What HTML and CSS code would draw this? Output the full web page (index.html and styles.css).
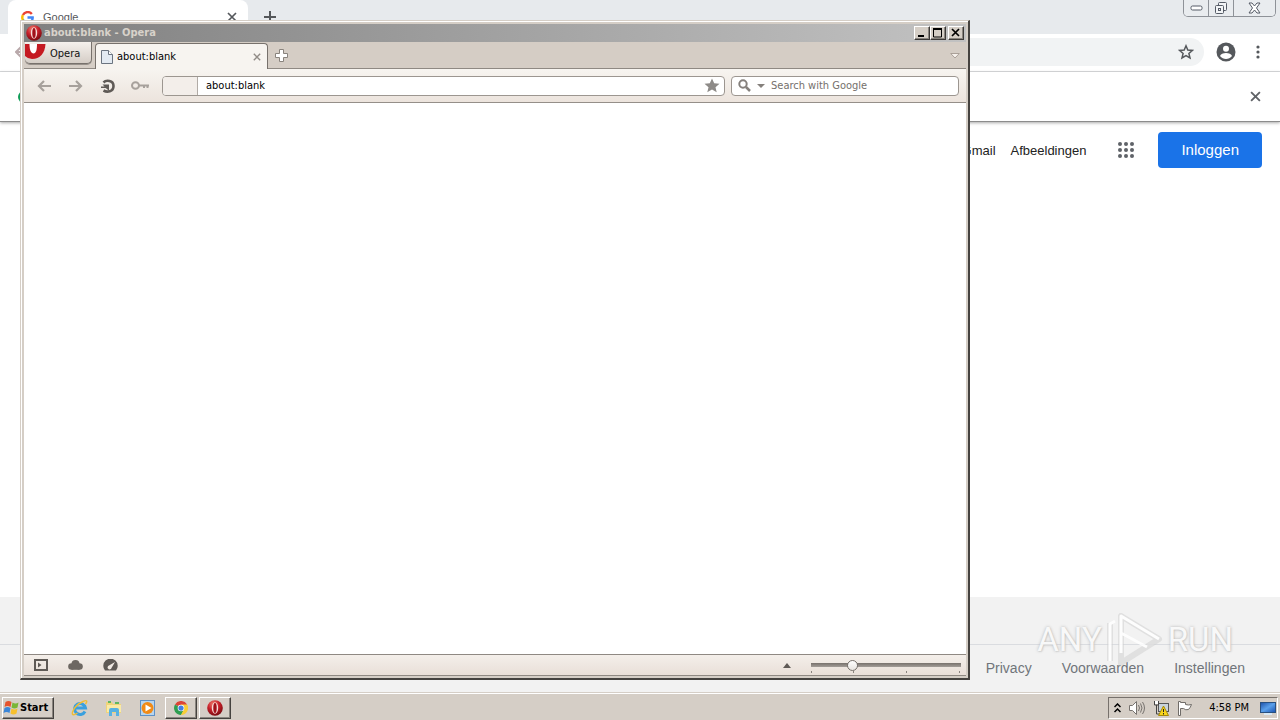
FILE: index.html
```html
<!DOCTYPE html>
<html lang="nl">
<head>
<meta charset="utf-8">
<title>about:blank - Opera</title>
<link rel="stylesheet" href="styles.css">
</head>
<body>
<svg class="defs" width="0" height="0" aria-hidden="true">
  <defs>
    <radialGradient id="red" cx="40%" cy="25%" r="75%"><stop offset="0" stop-color="#f08070"/><stop offset=".5" stop-color="#c8202a"/><stop offset="1" stop-color="#7c0a10"/></radialGradient>
    <linearGradient id="blue" x1="0" y1="0" x2="1" y2="1"><stop offset="0" stop-color="#1c50a8"/><stop offset=".5" stop-color="#5aa0ea"/><stop offset="1" stop-color="#1850b0"/></linearGradient>
    <symbol id="opera" viewBox="0 0 16 16"><circle cx="8" cy="8" r="7.8" fill="url(#red)"/><ellipse cx="8" cy="8" rx="3.2" ry="5.8" fill="#f6dcd8"/><ellipse cx="8" cy="8" rx="1.700" ry="5" fill="#a01018"/></symbol>
    <symbol id="cross" viewBox="0 0 10 10"><path d="M1 1l8 8M9 1L1 9" fill="none" stroke="currentColor" stroke-width="1.700"/></symbol>
  </defs>
</svg>
<div class="desktop">
  <main class="chrome">
    <div class="strip">
      <div class="chrome-tab">
        <svg class="g-logo" width="13" height="13" viewBox="0 0 24 24" fill="none" stroke-width="4.500"><path d="M20 5.500A10 10 0 0 0 3.500 7.500" stroke="#ea4335"/><path d="M3.500 7.500a10 10 0 0 0 0 9" stroke="#fbbc05"/><path d="M3.500 16.500A10 10 0 0 0 18.500 19.500" stroke="#34a853"/><path d="M18.500 19.500A9 9 0 0 0 21.500 12H12" stroke="#4285f4"/></svg>
        <span>Google</span>
        <button class="plain" aria-label="Tabblad sluiten"><svg width="10" height="10"><use href="#cross"/></svg></button>
      </div>
      <button class="plain new-tab" aria-label="Nieuw tabblad"><svg width="12" height="12" viewBox="0 0 12 12"><path d="M6 0v12M0 6h12" stroke="#54575a" stroke-width="2"/></svg></button>
      <div class="caption">
        <button aria-label="Minimaliseren"><svg width="13" height="6" viewBox="0 0 13 6"><rect x="1" y="1" width="11" height="4" rx="1.500" fill="#fff" stroke="#555b66"/></svg></button>
        <button aria-label="Herstellen"><svg width="14" height="14" viewBox="0 0 14 14" fill="#f2f4f6" stroke="#555b66"><rect x="4.500" y="1.500" width="8" height="8" rx="1"/><rect x="1.500" y="4.500" width="8" height="8" rx="1"/><rect x="4.500" y="7.500" width="2" height="2"/></svg></button>
        <button aria-label="Sluiten"><svg width="13" height="12" viewBox="0 0 13 12"><path d="M1 1h3l2.500 3L9 1h3L8.500 6l3.500 5H9L6.500 8 4 11H1l3.500-5z" fill="#fff" stroke="#555b66"/></svg></button>
      </div>
    </div>
    <div class="nav">
      <button class="plain" aria-label="Vorige"><svg width="12" height="12" viewBox="0 0 12 12" fill="none" stroke="#b9a9ab" stroke-width="2"><path d="M6 1L1 6l5 5M1 6h11"/></svg></button>
      <div class="omnibox">
        <input type="text" aria-label="Adres">
        <button class="plain" aria-label="Bladwijzer"><svg width="16" height="16" viewBox="0 0 16 16" fill="none" stroke="#55585c" stroke-width="1.500"><path d="M8 1.800l1.800 4.200 4.600.4-3.500 3 1.100 4.500L8 11.500l-4 2.400 1.100-4.500-3.500-3 4.600-.4z"/></svg></button>
      </div>
      <button class="plain" aria-label="Profiel"><svg width="20" height="20" viewBox="0 0 20 20"><circle cx="10" cy="10" r="9.500" fill="#55585c"/><circle cx="10" cy="6.700" r="3" fill="#fff"/><path d="M4 14c1-4 11-4 12 0-3 4-9 4-12 0z" fill="#fff"/></svg></button>
      <button class="plain" aria-label="Menu"><svg width="4" height="14" viewBox="0 0 4 14" fill="#55585c"><circle cx="2" cy="2" r="1.600"/><circle cx="2" cy="7" r="1.600"/><circle cx="2" cy="12" r="1.600"/></svg></button>
    </div>
    <div class="infobar">
      <span class="dot"></span>
      <button class="plain" aria-label="Melding sluiten"><svg width="11" height="11"><use href="#cross"/></svg></button>
    </div>
    <div class="links">
      <a href="#">Gmail</a>
      <a href="#">Afbeeldingen</a>
      <button class="plain apps" aria-label="Google-apps"><svg width="18" height="18" viewBox="0 0 18 18" fill="#5f6368"><circle cx="3" cy="3" r="2"/><circle cx="9" cy="3" r="2"/><circle cx="15" cy="3" r="2"/><circle cx="3" cy="9" r="2"/><circle cx="9" cy="9" r="2"/><circle cx="15" cy="9" r="2"/><circle cx="3" cy="15" r="2"/><circle cx="9" cy="15" r="2"/><circle cx="15" cy="15" r="2"/></svg></button>
      <a class="login" href="#">Inloggen</a>
    </div>
    <footer class="footer">
      <div class="country"></div>
      <div class="legal"><a href="#">Privacy</a><a href="#">Voorwaarden</a><a href="#">Instellingen</a></div>
    </footer>
  </main>

  <section class="window" aria-label="Opera">
    <header class="title">
      <svg width="16" height="16"><use href="#opera"/></svg>
      <h1>about:blank - Opera</h1>
      <div class="controls">
        <button aria-label="Minimize"><svg width="10" height="10" viewBox="0 0 10 10"><path d="M1 8h6" stroke="#000" stroke-width="2"/></svg></button>
        <button aria-label="Maximize"><svg width="10" height="10" viewBox="0 0 10 10"><path d="M.5 0v9h8V0" fill="none" stroke="#000"/><path d="M0 1h9" stroke="#000" stroke-width="2"/></svg></button>
        <button class="x" aria-label="Close"><svg width="10" height="10" viewBox="0 0 10 10"><path d="M1 1l7 7M8 1L1 8" stroke="#000" stroke-width="1.700"/></svg></button>
      </div>
    </header>
    <div class="tabs">
      <button class="menu"><svg width="21" height="16" viewBox="0 0 21 16"><path d="M0 0H20.500C20 9 15 15 7 15Q3 15 0 12z" fill="#c51a22"/><path d="M4.500 0h7.500c0 6-1 9.500-3.500 9.500S4.500 6 4.500 0z" fill="#fff"/></svg><span>Opera</span></button>
      <div class="tab">
        <svg width="12" height="14" viewBox="0 0 12 14"><path d="M.5.500h7l4 4v9H.5z" fill="#e3eaf2" stroke="#6b7480"/><path d="M7.500.500v4h4" fill="#fff" stroke="#6b7480"/></svg>
        <span>about:blank</span>
        <button class="plain" aria-label="Close tab"><svg width="8" height="8"><use href="#cross"/></svg></button>
      </div>
      <button class="plain add" aria-label="New tab"><svg width="13" height="13" viewBox="0 0 13 13"><path d="M4.500.500h4v4h4v4h-4v4h-4v-4h-4v-4h4z" fill="#fff" stroke="#89837d"/></svg></button>
      <button class="plain closed" aria-label="Closed tabs"><svg width="10" height="7" viewBox="0 0 10 7"><path d="M.7 1.500h8.600L5 6z" fill="#f6f1ec" stroke="#aaa098"/></svg></button>
    </div>
    <div class="toolbar">
      <button class="plain" aria-label="Back"><svg width="14" height="12" viewBox="0 0 14 12" fill="none" stroke="#a7a19c" stroke-width="2.200"><path d="M7 1L2 6l5 5M2 6h12"/></svg></button>
      <button class="plain" aria-label="Forward"><svg width="14" height="12" viewBox="0 0 14 12" fill="none" stroke="#a7a19c" stroke-width="2.200"><path d="M7 1l5 5-5 5M12 6H0"/></svg></button>
      <button class="plain" aria-label="Reload"><svg width="14" height="14" viewBox="0 0 14 14"><path d="M2.500 3.500C5 .8 12.500 1 12.500 7S6 13.500 2.500 11.500" fill="none" stroke="#5f5a56" stroke-width="2.600"/><path d="M0 9V7.500h3.500L1.500 5.500h6.500V12L6 10 4.500 9z" fill="#5f5a56"/></svg></button>
      <button class="plain" aria-label="Password"><svg width="18" height="9" viewBox="0 0 18 9" fill="none" stroke="#a7a19c" stroke-width="2"><ellipse cx="4.500" cy="4.500" rx="3.500" ry="3.300"/><path d="M8 4.500h10M13 4v3M16.500 4v3"/></svg></button>
      <div class="field address">
        <span class="badge"></span>
        <input type="text" value="about:blank" aria-label="Address">
        <button class="plain" aria-label="Bookmark"><svg width="16" height="15" viewBox="0 0 16 15"><path d="M8 .5l2.200 4.700 5.300.5-4 3.500 1.200 5L8 11.500l-4.700 2.700 1.200-5-4-3.500 5.300-.5z" fill="#8e8b88"/></svg></button>
      </div>
      <div class="field search">
        <svg width="13" height="13" viewBox="0 0 13 13" fill="none" stroke="#85807c"><circle cx="5" cy="5" r="3.700" stroke-width="2"/><path d="M8 8l4 4" stroke-width="2.500"/></svg>
        <svg width="8" height="4" viewBox="0 0 8 4"><path d="M0 0h8L4 4z" fill="#85807c"/></svg>
        <input type="text" placeholder="Search with Google" aria-label="Search with Google">
      </div>
    </div>
    <div class="page"></div>
    <div class="status">
      <button class="plain" aria-label="Panels"><svg width="14" height="12" viewBox="0 0 14 12"><rect x="1" y="1" width="12" height="10" fill="none" stroke="#5f5a56" stroke-width="2"/><path d="M4 3.500v5L7.500 6z" fill="#5f5a56"/></svg></button>
      <button class="plain" aria-label="Opera Link"><svg width="15" height="10" viewBox="0 0 15 10" fill="#6d6762"><circle cx="3.500" cy="6.500" r="3.300"/><circle cx="7.500" cy="4" r="4"/><circle cx="11.500" cy="6.500" r="3.300"/><path d="M3.500 5h8v4.800h-8z"/></svg></button>
      <button class="plain" aria-label="Opera Turbo"><svg width="15" height="12" viewBox="0 0 15 12"><path d="M2 11.500A7.200 7.200 0 1 1 13 11.500z" fill="#5f5a56"/><path d="M12 3L6 6.500a2 2 0 1 0 2.500 2.500z" fill="#f1eae4"/></svg></button>
      <button class="plain up" aria-label="View"><svg width="8" height="5" viewBox="0 0 8 5"><path d="M0 5h8L4 0z" fill="#5f5a56"/></svg></button>
      <div class="zoom"><input type="range" min="0" max="100" value="26" aria-label="Zoom"><div class="ticks"><i></i><i></i><i></i><i></i></div></div>
    </div>
  </section>

  <div class="watermark">
    <span>ANY</span>
    <svg width="58" height="58" viewBox="0 0 58 58" fill="none" stroke-linejoin="round"><g stroke="#cfcfcf" stroke-opacity=".6" stroke-width="6"><path d="M15 5v47l38-24zM4 12v38"/></g><path d="M15 5v47l38-24z" stroke="#dedede" stroke-width="4"/><path d="M15 42V5l38 23M4 50V13l5-3M15 22l26 14" stroke="#fff" stroke-width="3"/></svg>
    <span>RUN</span>
  </div>

  <nav class="taskbar" aria-label="Taskbar">
    <button class="raised start"><svg width="17" height="16" viewBox="0 0 16 16"><path d="M2 2q3-2 6 0L7 7Q4 5 1 7z" fill="#e5532d"/><path d="M9 2.500q3 2 6 0l-1 5q-3 2-6 0z" fill="#79b637"/><path d="M1 8q3-2 6 0l-1 5q-3-2-6 0z" fill="#3b86d8"/><path d="M8 8.500q3 2 6 0l-1 5q-3 2-6 0z" fill="#f7c02c"/></svg><b>Start</b></button>
    <div class="quick">
      <button class="plain" aria-label="Internet Explorer"><svg width="18" height="18" viewBox="0 0 18 18" fill="none"><path d="M14 12.500A5.500 5.500 0 1 1 14.500 9H4" stroke="#3aa0de" stroke-width="3"/><path d="M14.500 5Q18 0 12 2.500 4 6 1.500 13c-1 4 2 3 5 1" stroke="#efbd35" stroke-width="1.400"/></svg></button>
      <button class="plain" aria-label="Explorer"><svg width="18" height="18" viewBox="0 0 18 18"><path d="M1 3h6l1 2h8v9H1z" fill="#efd47a"/><path d="M2 6h14v7H2z" fill="#faeaa6"/><path d="M3 3h3M10 4h4" stroke="#62b760" stroke-width="2"/><path d="M4 17v-6q0-2 2-2h6q2 0 2 2v6h-3v-4H7v4z" fill="#58b1e2"/></svg></button>
      <button class="plain" aria-label="Media Player"><svg width="18" height="18" viewBox="0 0 18 18"><rect x="1.500" y="1.500" width="14" height="15" fill="#b7d5ef" stroke="#5e91c7"/><circle cx="8.500" cy="9" r="6" fill="#f18a16"/><path d="M6.500 5.500v7l6-3.500z" fill="#fff"/></svg></button>
    </div>
    <button class="raised task" aria-label="Chrome"><svg width="14" height="14" viewBox="0 0 16 16"><path d="M8 8L1.100 4A8 8 0 0 1 15 4z" fill="#dc4437"/><path d="M8 8L1.100 4A8 8 0 0 0 8 16l3-5z" fill="#2f9e50"/><path d="M8 4h7A8 8 0 0 1 8 16l3-6z" fill="#f8cd36"/><circle cx="8" cy="8" r="3.800" fill="#fff"/><circle cx="8" cy="8" r="3" fill="#437ee0"/></svg></button>
    <button class="raised task" aria-label="Opera"><svg width="16" height="16"><use href="#opera"/></svg></button>
    <div class="tray">
      <svg width="7" height="10" viewBox="0 0 7 10" fill="none" stroke="#000" stroke-width="1.500"><path d="M.5 4l3-3 3 3M.5 9l3-3 3 3"/></svg>
      <svg width="16" height="16" viewBox="0 0 16 16" fill="none" stroke="#77736f"><path d="M.5 5.500h3l4-4v13l-4-4h-3z" fill="#fff"/><path d="M9.500 5q2 3 0 6M11.500 3.500q3 4.500 0 9M13.500 2q4 6 0 12"/></svg>
      <svg width="16" height="16" viewBox="0 0 16 16"><rect x="5.500" y="3.500" width="10" height="8" fill="#c9d3dc" stroke="#565656"/><path d="M1.500 1v4h4V1M3.500 5v9h5" fill="none" stroke="#444"/><path d="M2 1h3v3H2z" fill="#fff"/><path d="M10.500 6l5 9.500h-10z" fill="#f9d51a" stroke="#a48808"/><path d="M10.500 9v3M10.500 13v1.500" stroke="#222"/></svg>
      <svg width="16" height="16" viewBox="0 0 16 16"><path d="M1.500 15.500V1.500h2v1h5v2q3 1 6 0-1 3-3 5-3 1-5-1h-3v7z" fill="#fff" stroke="#706c68"/></svg>
      <time>4:58 PM</time>
      <svg width="16" height="14" viewBox="0 0 16 14"><rect x=".5" y="1.500" width="15" height="10" fill="url(#blue)" stroke="#285080"/><path d="M4 13h8" stroke="#d8e8f4" stroke-width="2"/></svg>
    </div>
  </nav>
</div>
</body>
</html>
```

FILE: styles.css
```css
* { box-sizing: border-box; }
body { margin: 0; font-family: "Liberation Sans", Arial, sans-serif; }
svg { display: block; flex: none; }
.defs { position: absolute; }
button { font: inherit; color: inherit; padding: 0; }
input { font: inherit; min-width: 0; }
a { color: inherit; text-decoration: none; }
.plain { border: 0; background: none; display: flex; align-items: center; flex: none; }

.desktop { position: relative; min-height: 100vh; display: flex; flex-direction: column; overflow: hidden; }

/* background browser */
.chrome { flex: 1; display: flex; flex-direction: column; background: #fff; }
.strip { display: flex; height: 34px; background: #e7eaed; padding-left: 8px; }
.chrome-tab { width: 240px; background: #fff; border-radius: 8px 8px 0 0; display: flex; align-items: center; gap: 9px; padding: 0 11px 0 13px; font-size: 11px; color: #55585c; }
.chrome-tab .plain { margin-left: auto; }
.new-tab { margin-left: 16px; }
.caption { margin-left: auto; margin-right: 4px; display: flex; height: 17px; border: 1px solid #8e9298; border-top: 0; border-radius: 0 0 5px 5px; overflow: hidden; }
.caption button { width: 25px; border: 0; border-right: 1px solid #8e9298; background: #e9ecef; display: grid; place-items: center; }
.caption button:last-child { width: 41px; border-right: 0; }
.nav { display: flex; align-items: center; height: 38px; border-bottom: 1px solid #d6d8da; padding: 0 20px 2px 15px; gap: 12px; }
.nav > .plain:last-child { margin-left: 8px; }
.omnibox { flex: 1; display: flex; align-items: center; height: 28px; border-radius: 14px; background: #f1f3f4; padding-right: 10px; }
.omnibox input { flex: 1; border: 0; background: none; }
.infobar { display: flex; align-items: center; justify-content: space-between; height: 50px; padding: 0 19px 0 18px; border-bottom: 1px solid #8c8c8c; box-shadow: 0 1px 3px #aaa; color: #606367; }
.dot { width: 12px; height: 12px; border-radius: 50%; background: #0f9d58; }
.links { display: flex; align-items: center; justify-content: flex-end; gap: 15px; padding: 10px 18px; font-size: 13px; color: #222; }
.apps { margin: 0 8px 0 16px; }
.login { background: #1a73e8; color: #fff; border-radius: 4px; padding: 0 23px; line-height: 36px; font-size: 15px; }
.footer { margin-top: auto; background: #f2f2f2; font-size: 14px; color: #70757a; }
.country { height: 48px; border-bottom: 1px solid #dadce0; }
.legal { display: flex; justify-content: flex-end; gap: 30px; padding: 0 35px; line-height: 47px; }

/* foreground window */
.window { position: absolute; left: 20px; right: 310px; top: 20px; bottom: 40px; display: flex; flex-direction: column; padding: 3px 2px 2px 3px; background: #d5cec6; border: 1px solid; border-color: #d5cec6 #45423f #45423f #d5cec6; border-width: 1px 2px 2px 1px; box-shadow: inset 1px 1px #fff; font: 11px/16px "DejaVu Sans Condensed", "DejaVu Sans", sans-serif; color: #111; }
.title { display: flex; align-items: center; height: 18px; padding: 0 2px; gap: 2px; background: linear-gradient(90deg, #808080, #c2c2c2); }
.title h1 { margin: 0; flex: 1; font-size: 11px; line-height: 18px; color: #d8d2ca; }
.controls { display: flex; }
.controls button { width: 16px; height: 14px; border: 1px solid; border-color: #fff #3d3a38 #3d3a38 #fff; background: #d5cec6; box-shadow: inset -1px -1px #8a857f; display: grid; place-items: center; }
.controls .x { margin-left: 2px; }
.tabs { display: flex; height: 27px; padding: 0 6px 0 1px; background: #d5cdc5; border-bottom: 1px solid #8f8983; }
.menu { width: 67px; height: 22px; padding-top: 2px; border: 1px solid #77716c; border-top: 0; border-left: 0; border-radius: 0 0 5px 5px; background: linear-gradient(#f5f1ed, #d5cdc6); box-shadow: 0 1px #98918b; display: flex; align-items: flex-start; gap: 4px; overflow: hidden; }
.menu span { line-height: 20px; }
.tab { width: 173px; height: 26px; margin: 1px 0 0 3px; border: 1px solid #77716c; border-bottom: 0; border-radius: 4px 4px 0 0; background: #f7f4f0; display: flex; align-items: center; gap: 4px; padding: 0 6px 0 5px; color: #000; }
.tab .plain { margin-left: auto; color: #918b86; }
.add { margin-left: 7px; }
.closed { margin-left: auto; }
.toolbar { display: flex; align-items: center; height: 34px; padding: 0 7px 0 4px; background: linear-gradient(#f7f4f0, #ece4dd); border-bottom: 1px solid #958f89; }
.toolbar > .plain { width: 32px; justify-content: center; }
.field { display: flex; align-items: center; height: 20px; background: #fff; border: 1px solid #9c9690; border-radius: 4px; overflow: hidden; }
.field input { flex: 1; border: 0; background: none; outline: 0; padding: 0; height: 18px; color: #000; }
.field input::placeholder { color: #75706c; opacity: 1; }
.address { flex: 1; margin: 0 6px; padding-right: 4px; }
.badge { width: 35px; align-self: stretch; background: #f3eeea; border-right: 1px solid #b1aba6; margin-right: 8px; }
.search { width: 228px; padding: 0 6px; gap: 6px; }
.page { flex: 1; background: #fff; }
.status { display: flex; align-items: center; height: 22px; padding: 0 5px 0 10px; gap: 20px; background: linear-gradient(#f4efea, #e9dfd8); border-top: 1px solid #8f8983; border-bottom: 1px solid #8f8983; }
.up { margin-left: auto; }
.zoom { width: 150px; height: 16px; }
.zoom input { display: block; appearance: none; width: 100%; height: 12px; margin: 2px 0 0; border-radius: 2px; background: linear-gradient(#77716c, #a39d98) center / 100% 4px no-repeat; }
.zoom input::-webkit-slider-thumb { appearance: none; width: 11px; height: 11px; border: 1px solid #77716c; border-radius: 50%; background: linear-gradient(#fff, #e8e4e0); }
.ticks { display: grid; grid-template-columns: 42px 53px 53px 1px; height: 2px; }
.ticks i { width: 1px; background: #89837e; }

.watermark { position: absolute; right: 47px; bottom: 51px; display: flex; align-items: center; gap: 4px; font: 33px/36px Roboto, "Liberation Sans", sans-serif; color: #fafafa; text-shadow: 0 0 3px #aaa, 1px 1px 1px #ddd; opacity: .85; pointer-events: none; }

/* taskbar */
.taskbar { display: flex; align-items: center; height: 28px; padding: 3px 2px 1px; background: #d5cec6; border-top: 1px solid #d5cec6; box-shadow: inset 0 1px #fff; font: 11px/16px "DejaVu Sans Condensed", "DejaVu Sans", sans-serif; color: #000; }
.raised { height: 22px; border: 1px solid; border-color: #fff #45423f #45423f #fff; background: #d5cec6; box-shadow: inset -1px -1px #8a857f; display: flex; align-items: center; justify-content: center; flex: none; }
.start { width: 52px; justify-content: flex-start; }
.quick { display: flex; gap: 16px; margin: 0 8px 0 17px; }
.task { width: 32px; margin-right: 2px; }
.tray { margin-left: auto; display: flex; align-items: center; gap: 8px; height: 22px; border: 1px solid; border-color: #77716c #fff #fff #77716c; padding: 0 1px 0 5px; }
.tray time { margin: 0 3px 0 8px; }
```
